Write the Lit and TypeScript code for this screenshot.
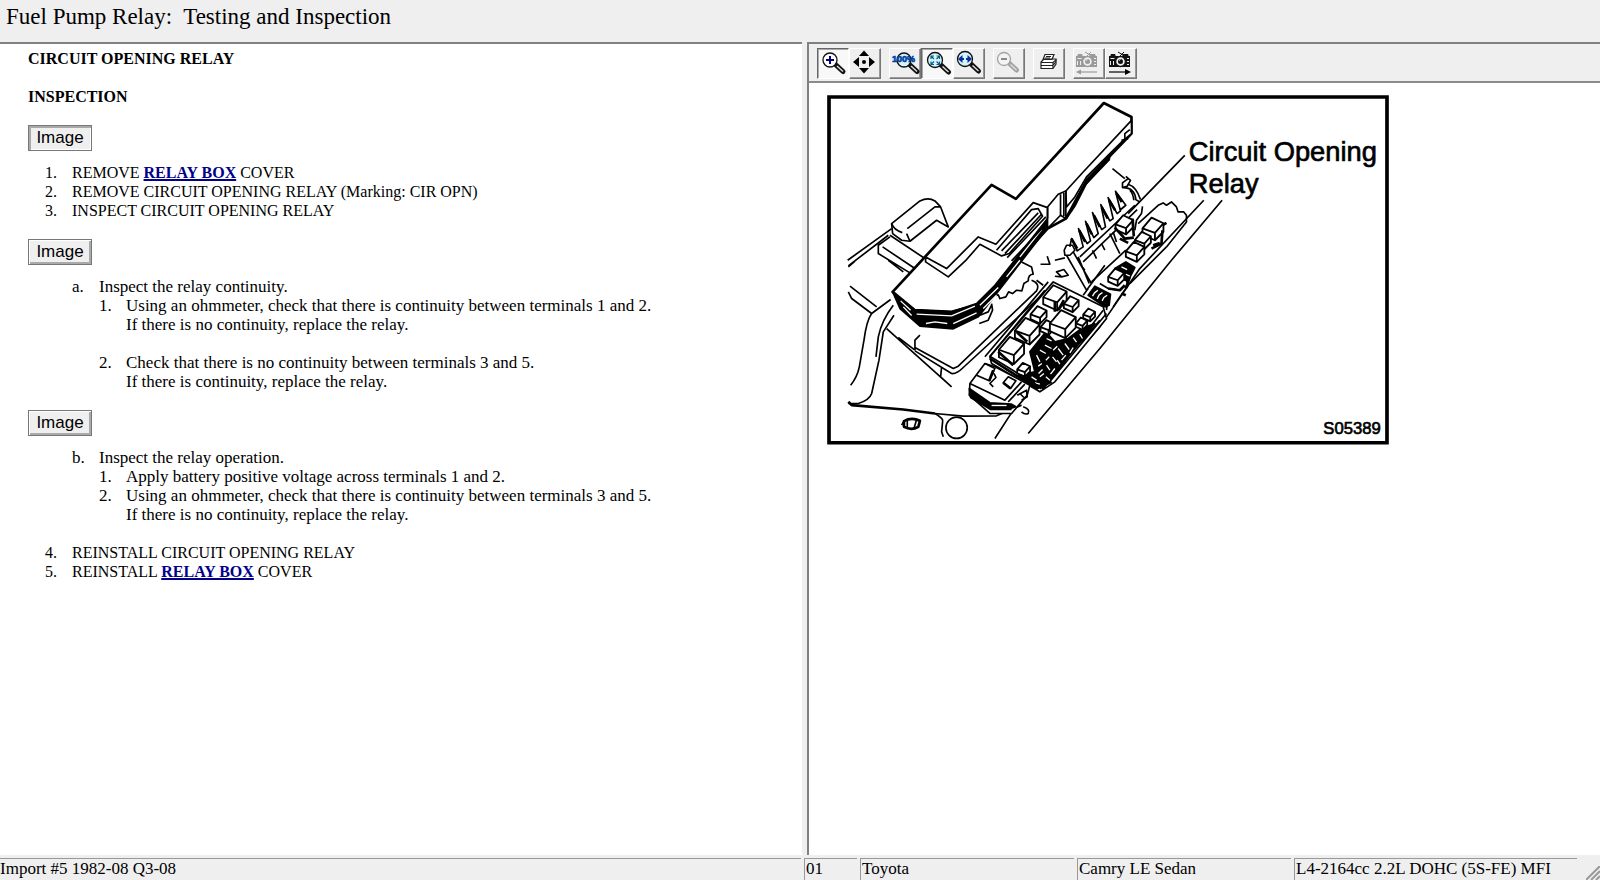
import { LitElement, html, svg, css } from "lit";
import { customElement, property } from "lit/decorators.js";

const lens = (cx: number, cy: number, r: number, fill = "#fff", ink = "#111") => svg`
  <path d="M${cx + r - 1} ${cy + r - 2}l7 6.500" stroke=${ink} stroke-width="5" stroke-linecap="round"/>
  <path d="M${cx + r} ${cy + r - 1}l6 5.500" stroke="#ddd" stroke-width="1.400"/>
  <circle cx=${cx} cy=${cy} r=${r} fill=${fill} stroke=${ink} stroke-width="1.300"/>`;

const camera = (ink: string, paper: string) => svg`
  <path d="M3 8h21v11H3z" fill=${ink}/>
  <path d="M5 6.500h4v2H5zM17 6.500h5v2h-5zM12 4l5 3M18 4l-4 4" fill=${ink} stroke=${ink}/>
  <circle cx="14.500" cy="13.500" r="5" fill=${paper} stroke=${ink} stroke-width="1.500"/>
  <circle cx="14.500" cy="13.500" r="2.500" fill=${ink}/>
  <path d="M13 12.500l1.500-1M4.500 10.500h4M4.500 13v4M7.500 13v4M21 10.500h2M21 13.500h2M21 16.500h2" stroke=${paper}/>`;

const icons: Record<string, unknown> = {
  zoomIn: svg`${lens(13, 12, 7)}<path d="M9 12h8M13 8v8" stroke="#00007c" stroke-width="2"/>`,
  pan: svg`<path d="M15 2.500l5 5.500h-10zM15 25.500l5-5.500h-10zM4 14l6-5v10zM26 14l-6-5v10z" fill="#000"/><circle cx="15" cy="14" r="2" fill="#000"/>`,
  full: svg`${lens(15, 12, 7, "#d4f3fb")}<text x="3" y="14" class="percent">100%</text>`,
  fit: svg`${lens(14, 12, 7.5, "#d4f3fb")}<path d="M10 11V8h3M15.500 8h3v3M18.500 13.500v3h-3M13 16.500h-3v-3M10.500 8.500l2.500 2.500M18 8.500L15.500 11M18 16L15.500 13.500M10.500 16L13 13.500" stroke="#0a5c8c" stroke-width="1.200"/>`,
  width: svg`${lens(12, 11, 7.5, "#d4f3fb")}<path d="M5 11l4.500-4v3h1.500v2H9.500v3zM19 11l-4.500-4v3H13v2h1.500v3z" fill="#0a2e9c"/>`,
  zoomOut: svg`${lens(11, 11, 6.5, "#f4f4f4", "#a3a3a3")}<path d="M8 11h6" stroke="#8a8a8a" stroke-width="2"/>`,
  print: svg`<path d="M12 6.500h9l-2 5H10zM8 14l3-3h12v5L20 20.500H8z" fill="#fff" stroke="#222" stroke-width="1.200"/>
    <path d="M8 14.500h12l3.500-3M20 14.500V20M8 17.500h12l3-4M13 8.500h5M12 10h5" stroke="#222" stroke-width="1.200"/>`,
  previous: svg`${camera("#9a9a9a", "#efefef")}<path d="M5 24h19" stroke="#9a9a9a" stroke-width="1.200"/><path d="M3 24l5-2.500v5z" fill="#9a9a9a"/>`,
  next: svg`<g transform="translate(1 0)">${camera("#111", "#efefef")}</g><path d="M4 24h19" stroke="#000" stroke-width="1.200"/><path d="M26 24l-6-3v6z" fill="#000"/>`,
};

interface Tool { id: string; label: string; pressed?: boolean; disabled?: boolean }
const toolGroups: Tool[][] = [
  [{ id: "zoomIn", label: "Zoom in", pressed: true }, { id: "pan", label: "Pan" }],
  [{ id: "full", label: "Actual size" }, { id: "fit", label: "Fit to window", pressed: true }, { id: "width", label: "Fit width" }],
  [{ id: "zoomOut", label: "Zoom out", disabled: true }],
  [{ id: "print", label: "Print" }],
  [{ id: "previous", label: "Previous image", disabled: true }, { id: "next", label: "Next image" }],
];

@customElement("image-toolbar")
class ImageToolbar extends LitElement {
  static styles = css`
    :host { display: flex; gap: 8px; padding: 4px 8px 2px; background: #efefef; border-bottom: 2px solid #8c8c8c; }
    .group { display: flex; }
    .tool { width: 32px; height: 31px; padding: 0; background: #efefef; border: 1px solid; border-color: #fff #777 #777 #fff; box-shadow: inset -1px -1px #999; }
    .tool.pressed { background: #f8f8f8; border-color: #666 #fff #fff #666; box-shadow: inset 1px 1px #aaa; }
    .icon { display: block; width: 30px; height: 29px; fill: none; }
    .percent { font: bold 9px "Liberation Sans", Arial, sans-serif; fill: #003f9c; stroke: #003f9c; stroke-width: 0.6px; }
  `;
  render() {
    return toolGroups.map((group) => html`<div class="group">${group.map((t) => html`
      <button class="tool ${t.pressed ? "pressed" : ""}" aria-label=${t.label} ?disabled=${t.disabled}>
        <svg class="icon" viewBox="1 1 30 29" aria-hidden="true">${icons[t.id]}</svg>
      </button>`)}</div>`);
  }
}

/* A relay or fuse block seen from above, front-left; line weight stays even at any scale. */
const block = (x: number, y: number, s: number) => svg`
  <g transform="translate(${x} ${y}) scale(${s})" stroke-width=${5.5 / s}>
    <path class="solid" d="M0 38L32 0L74 20L74 50L44 80L0 60Z"/>
    <path d="M0 38L44 54L74 20M44 54V80"/>
  </g>`;

@customElement("relay-diagram")
class RelayDiagram extends LitElement {
  static styles = css`
    :host { display: block; }
    .art { display: block; width: 562px; max-width: 100%; height: auto; fill: none; stroke: #000; stroke-width: 5; stroke-linejoin: round; }
    .solid { fill: #fff; }
    .ink { fill: #000; }
    .heavy { stroke-width: 8; }
    .frame { stroke-width: 11; stroke-linejoin: miter; }
    .gap { stroke: #fff; stroke-width: 4; }
    .label { font: 82px "Liberation Sans", Arial, sans-serif; fill: #000; stroke-width: 2; }
    .code { font: 50px "Liberation Sans", Arial, sans-serif; fill: #000; stroke-width: 2; }
  `;
  render() {
    return html`<svg class="art" viewBox="21 14 1687 1050" role="img" aria-label="Location of the circuit opening relay">
      <path class="frame" d="M27 20H1702V1058H27Z"/>
      <!-- body panels and cowl -->
      <path d="M83 510L215 415M85 527L205 435M210 435L315 505M210 440L175 465V490L270 548M188 470L285 535M85 530L105 513M205 510L250 545"/>
      <path class="solid" d="M215 400L300 332Q325 320 345 332L362 350L385 410L350 390L270 453L245 450L218 430Z"/>
      <path d="M362 350H345L262 415M215 400Q222 420 247 427M260 430L270 453"/>
      <g transform="translate(0 510)">
        <path d="M90 78L170 140M85 95L95 115L155 160L212 118M155 160Q140 180 132 240L118 320Q112 350 92 375M220 135Q185 180 175 230L168 290M222 165L190 215L177 300L155 400Q148 420 115 430H85"/>
        <path class="heavy" d="M85 425L95 435L250 448L345 460"/>
        <path d="M345 460L430 468L530 467L605 435M200 205L395 380M235 232L285 270M285 262L400 325L415 318L650 92Q662 70 635 60M285 270V240L300 225M285 272L395 340Q410 342 430 322L682 90M365 320L362 350L395 380"/>
        <path d="M345 460Q372 475 368 485L365 515L370 530"/>
        <circle cx="410" cy="503" r="32"/>
        <path class="heavy" d="M252 483Q275 470 300 482L295 500Q275 512 252 500Z"/>
        <path d="M262 478V502M290 478L282 505M245 495L252 483"/>
        <path d="M515 95L518 108L535 104L540 115L558 110L566 95L578 100L590 90L606 92L612 70L625 62Q625 42 640 42L635 20L605 5M480 165L505 155L515 135M478 190L505 180L518 150L515 130"/>
        <path d="M610 440Q632 448 625 460Q615 465 605 455"/>
      </g>
      <path d="M1207 330L1055 510L840 775L625 1030M1152 330L960 535L840 710L700 870M600 930L580 960L525 1045"/>

      <!-- relay box cover -->
      <path class="solid heavy" d="M218 605L515 284L588 326L852 38L935 80V130L800 270L738 385L683 415L525 590L470 645L395 665L285 660Z"/>
      <path class="ink" d="M218 605L285 660L395 665L470 640L525 585L683 385V412L530 610L475 680L400 716L300 708L240 655Z"/>
      <path class="gap" d="M242 632L272 660M250 650L275 676M290 672L395 677L465 648M318 700L345 695L382 700M400 700L470 668M480 645L535 592M490 655L530 615M560 560L600 510M600 500L665 418"/>
      <path class="solid" d="M738 302L790 245L935 90V130L905 155L870 190L800 260L765 320L740 350Z"/>
      <path class="solid" d="M738 302L715 312L683 350V415L722 375L738 385Z"/>
      <path d="M722 312V375M732 308V378M915 145V130L930 118M900 165L925 140M755 362L790 290L870 207M905 150L925 145"/>
      <path class="heavy" d="M738 385L765 345L798 280L870 200"/>
      <path d="M317 500V515L385 560L440 508L480 462L545 497L568 490L668 378L655 355L635 358L530 480M317 500L380 535L475 440L528 462L640 337L683 352V385"/>
      <path d="M545 482L655 368M555 490L665 372M562 502L678 380M575 512L682 398"/>

      <!-- fins, loom and upper relays -->
      <g transform="translate(600 180)">
        <path d="M150 290L155 265L172 302L190 290L176 235L202 280L212 272L197 213L222 262L235 250L218 187L246 238L257 230L243 163L270 212L280 205L265 142L292 190L302 182L287 123L318 165L300 180"/>
        <path class="heavy" d="M155 265L172 295M178 240L196 275M200 220L216 252M222 195L240 230M246 172L264 205M268 150L286 180M290 130L306 155"/>
        <path d="M180 320L345 165M190 335L352 178M278 55L315 85M318 78L332 90L322 108L308 112V98L325 85M310 112Q345 112 348 148L360 155M325 102Q350 110 362 148M330 120Q340 130 342 150"/>
        <path d="M495 15L325 190M133 300L140 285H158L165 300L150 315H135ZM140 315L200 420M160 305L215 400M175 320L208 400M105 330L135 323M62 342H90L82 318M110 365L125 380L145 375L132 358ZM105 378L125 380M180 340L195 360M218 300L230 325M245 280L255 300M270 250L300 310M280 245L290 275M215 400L255 345"/>
        <path d="M355 220L415 165L430 158L440 165L455 155L470 170L475 185L492 185L500 195V215L440 290M368 168L365 190L350 210L345 240"/>
        ${block(287, 195, 0.72)}
        <path class="heavy" d="M285 232L315 265L342 262M338 205L342 258M300 265L325 278"/>
        ${block(368, 202, 0.85)}
        <path class="heavy" d="M395 295L425 280L428 240M400 285L420 278M428 225L440 218"/>
        ${block(345, 245, 0.65)}
        ${block(318, 275, 0.75)}
        <path class="ink" d="M285 355L318 335L345 352L325 392L295 385Z"/>
        <path class="gap" d="M305 350L322 358M318 372L330 378M298 365L310 380"/>
        ${block(265, 355, 0.65)}
        <path class="heavy" d="M330 380L318 415M318 435L305 430M265 415L300 420L315 405"/>
        <path d="M330 400L440 290M300 440L325 405L318 385M240 400L265 415L300 420M215 395L318 300"/>
        <path class="ink" d="M205 435L225 408L272 432L268 465L255 470Z"/>
        <path class="gap" d="M218 438L224 428L234 420M232 446L238 434L248 427M247 452L252 442L262 435"/>
        <path d="M200 420L215 400M190 435L205 415M280 470L300 440"/>
      </g>

      <!-- relay box -->
      <g transform="translate(360 510)">
        <path class="solid" d="M340 65L150 290L155 310L300 395L345 365L500 175L490 140Z"/>
        <path d="M325 65L135 290M315 90L150 288L300 380M290 60L310 75M490 150L310 385M500 160L325 370M505 110L500 150M480 180L320 360"/>
        <path class="ink" d="M270 275L318 215L345 245L385 235L425 205L465 190L310 385L235 345L285 335Z"/>
        <path class="gap" d="M290 285L300 305M300 270L318 280M315 255L335 265M338 290L350 305M355 265L370 285M375 250L388 268M400 232L410 246M320 315L330 330M295 318L306 310M345 325L332 342M275 350L290 360M365 300L378 285M300 350L312 340M390 278L400 262M320 235L335 242M340 270L352 258M308 328L296 340M420 222L428 235M360 312L352 300M318 300L328 290M330 360L318 350M285 368L300 372"/>
        ${block(272, 138, 0.65)}
        ${block(302, 180, 0.55)}
        ${block(310, 75, 0.95)}
        <path class="heavy" d="M345 125V155M372 120L355 150"/>
        ${block(372, 108, 0.6)}
        ${block(330, 150, 1.05)}
        ${block(225, 173, 1)}
        <path class="heavy" d="M230 215L262 245"/>
        ${block(177, 230, 1.02)}
        ${block(232, 308, 0.52)}
        ${block(430, 145, 0.48)}
        ${block(408, 172, 0.46)}
        <path class="heavy" d="M175 275L220 315M150 295L290 385L335 365M240 345L305 385"/>
        <!-- end connector -->
        <path class="solid" d="M135 310L90 370L88 405L150 460H215L262 405L270 375L165 320Z"/>
        <path class="ink" d="M88 385L150 428L215 432L228 440L205 447H150L92 412Z"/>
        <path class="gap" d="M155 436H200"/>
        <path d="M135 310L165 325L148 362L110 345M90 370L195 420L245 365M205 425L255 372M190 368L205 350L228 362L212 385ZM232 405L260 390L262 410L245 420M240 400L252 412M150 448H215M162 340L168 352L150 370L160 380"/>
        <path class="heavy" d="M148 362L160 330M190 368L212 385"/>
      </g>

      <text class="label" x="1107" y="213">Circuit Opening</text>
      <text class="label" x="1107" y="307">Relay</text>
      <text class="code" x="1511" y="1033">S05389</text>
    </svg>`;
  }
}

@customElement("status-bar")
class StatusBar extends LitElement {
  @property({ attribute: false }) cells: string[] = [];
  static styles = css`
    :host { display: grid; grid-template-columns: 801fr 53fr 214fr 214fr 283fr 20fr; column-gap: 3px; padding-top: 3px; background: #efefef; font-size: 17px; line-height: 19px; }
    .cell { min-width: 0; border-top: 1px solid #999; border-left: 1px solid #999; padding: 0 0 2px 1px; white-space: nowrap; overflow: hidden; }
    .cell:first-child { border-left: 0; padding-left: 0; }
    .grip { align-self: end; justify-self: end; display: block; width: 14px; height: 14px; fill: none; stroke: #999; stroke-width: 2; }
  `;
  render() {
    return html`${this.cells.map((c) => html`<div class="cell">${c}</div>`)}
      <svg class="grip" viewBox="0 0 14 14" aria-hidden="true"><path d="M0 14L14 0M5 14L14 5M10 14L14 10"/></svg>`;
  }
}

const relayBox = html`<a class="link" href="#relay-box">RELAY BOX</a>`;

@customElement("app-root")
class AppRoot extends LitElement {
  static styles = css`
    :host { display: flex; flex-direction: column; height: 100vh; background: #efefef; color: #000; font-family: "Liberation Serif", "Times New Roman", serif; }
    .title { margin: 0; padding: 3px 6px 12px; font-size: 23px; line-height: 27px; font-weight: normal; white-space: pre-wrap; }
    .panes { flex: 1; min-height: 0; display: grid; grid-template-columns: 802fr 793fr; column-gap: 5px; }
    .article { overflow: auto; background: #fff; border-top: 2px solid #808080; padding: 5px 28px; font-size: 16px; line-height: 19px; }
    .viewer { overflow: hidden; background: #fff; border-top: 2px solid #808080; border-left: 2px solid #808080; }
    .canvas { padding: 12px 18px; }
    .heading { margin: 0 0 19px; font-size: 16px; line-height: 19px; }
    .image { display: block; width: 64px; height: 26px; margin: 19px 0 12px; padding: 0; background: #efefef; border: 1px solid #777; box-shadow: inset 1px 1px #fff, inset -2px -2px #aaa; font: 17px/22px "Liberation Sans", Arial, sans-serif; color: #000; }
    .image.active { box-shadow: inset 2px 2px #aaa, inset -1px -1px #fff; }
    .steps { list-style: none; margin: 0; padding: 0 0 0 17px; }
    .sub { padding-left: 44px; font-size: 17px; }
    .nested { padding-left: 0; }
    .step { display: grid; grid-template-columns: 27px 1fr; }
    .spaced { margin-bottom: 19px; }
    .link { color: #00008b; font-weight: bold; text-decoration: underline; text-decoration-thickness: 2px; }
  `;

  private step(marker: string, body: unknown, spaced = false) {
    return html`<li class="step ${spaced ? "spaced" : ""}"><span>${marker}</span><div>${body}</div></li>`;
  }

  render() {
    return html`
      <h1 class="title">Fuel Pump Relay:  Testing and Inspection</h1>
      <main class="panes">
        <article class="article">
          <h2 class="heading">CIRCUIT OPENING RELAY</h2>
          <h3 class="heading">INSPECTION</h3>
          <button class="image active">Image</button>
          <ol class="steps">
            ${this.step("1.", html`REMOVE ${relayBox} COVER`)}
            ${this.step("2.", "REMOVE CIRCUIT OPENING RELAY (Marking: CIR OPN)")}
            ${this.step("3.", "INSPECT CIRCUIT OPENING RELAY")}
          </ol>
          <button class="image">Image</button>
          <ol class="steps sub">
            ${this.step("a.", html`Inspect the relay continuity.
              <ol class="steps nested">
                ${this.step("1.", html`Using an ohmmeter, check that there is continuity between terminals 1 and 2.<br>If there is no continuity, replace the relay.`, true)}
                ${this.step("2.", html`Check that there is no continuity between terminals 3 and 5.<br>If there is continuity, replace the relay.`)}
              </ol>`)}
          </ol>
          <button class="image">Image</button>
          <ol class="steps sub">
            ${this.step("b.", html`Inspect the relay operation.
              <ol class="steps nested">
                ${this.step("1.", "Apply battery positive voltage across terminals 1 and 2.")}
                ${this.step("2.", html`Using an ohmmeter, check that there is continuity between terminals 3 and 5.<br>If there is no continuity, replace the relay.`)}
              </ol>`, true)}
          </ol>
          <ol class="steps" start="4">
            ${this.step("4.", "REINSTALL CIRCUIT OPENING RELAY")}
            ${this.step("5.", html`REINSTALL ${relayBox} COVER`)}
          </ol>
        </article>
        <section class="viewer" aria-label="Image viewer">
          <image-toolbar></image-toolbar>
          <div class="canvas"><relay-diagram></relay-diagram></div>
        </section>
      </main>
      <status-bar .cells=${["Import #5 1982-08 Q3-08", "01", "Toyota", "Camry LE Sedan", "L4-2164cc 2.2L DOHC (5S-FE) MFI"]}></status-bar>
    `;
  }
}
